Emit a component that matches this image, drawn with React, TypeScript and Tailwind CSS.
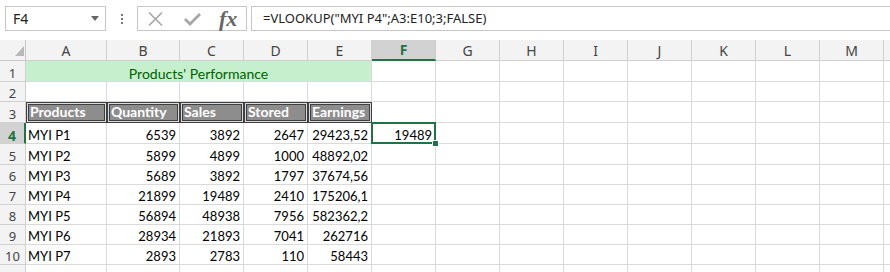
import { Fragment } from 'react';

const cols = ['A', 'B', 'C', 'D', 'E', 'F', 'G', 'H', 'I', 'J', 'K', 'L', 'M', ''];

const data = [
  ['MYI P1', '6539', '3892', '2647', '29423,52'],
  ['MYI P2', '5899', '4899', '1000', '48892,02'],
  ['MYI P3', '5689', '3892', '1797', '37674,56'],
  ['MYI P4', '21899', '19489', '2410', '175206,1'],
  ['MYI P5', '56894', '48938', '7956', '582362,2'],
  ['MYI P6', '28934', '21893', '7041', '262716'],
  ['MYI P7', '2893', '2783', '110', '58443'],
];

const heads = ['Products', 'Quantity', 'Sales', 'Stored', 'Earnings'];

const cell = 'border-r border-b border-[#dadada] bg-white';
const rowHead =
  'flex items-end justify-center leading-[15px] border-r border-b border-[#d0d0d0] bg-[#f3f3f3] text-[13px] text-[#444] font-["Noto_Sans",sans-serif]';

function Blank({ n }: { n: number }) {
  return (
    <>
      {Array.from({ length: n }).map((_, i) => (
        <div key={i} className={cell} />
      ))}
    </>
  );
}

export default function App() {
  return (
    <div className="w-[890px] h-[272px] overflow-hidden bg-white font-['Lato',sans-serif]">
      {/* formula bar */}
      <div className="h-[40px] flex items-start pt-[6px] bg-white">
        <div className="ml-[5px] w-[101px] h-[25px] border border-[#c6c6c6] flex items-center pl-[7px] pr-[6px] text-[14px] text-[#222] font-['Noto_Sans',sans-serif]">
          <span className="flex-1">F4</span>
          <svg width="8" height="5" viewBox="0 0 8 5">
            <polygon points="0,0 8,0 4,5" fill="#666" />
          </svg>
        </div>
        <div className="w-[31px] h-[25px] flex flex-col items-center justify-center gap-[2px]">
          <div className="w-[2px] h-[2px] bg-[#777]" />
          <div className="w-[2px] h-[2px] bg-[#777]" />
          <div className="w-[2px] h-[2px] bg-[#777]" />
        </div>
        <div className="w-[110px] h-[25px] border border-[#c6c6c6] flex items-center">
          <svg width="17" height="16" viewBox="0 0 17 16" className="ml-[9px]">
            <path d="M2 1.5 L15 14.5 M15 1.5 L2 14.5" stroke="#a6a6a6" strokeWidth="1.6" />
          </svg>
          <svg width="19" height="16" viewBox="0 0 19 16" className="ml-[19px]">
            <path d="M2 8 L7 13 L17 3" stroke="#a6a6a6" strokeWidth="2.8" fill="none" />
          </svg>
          <span className="ml-[17px] text-[22px] italic font-bold text-[#666] font-['Liberation_Serif',serif] leading-none">
            fx
          </span>
        </div>
        <div className="ml-[4px] flex-1 h-[25px] border border-r-0 border-[#c6c6c6] flex items-center pl-[11px] text-[13px] text-[#222] font-['Noto_Sans',sans-serif]">
          =VLOOKUP("MYI P4";A3:E10;3;FALSE)
        </div>
      </div>

      {/* sheet */}
      <div className="grid grid-cols-[26px_81px_73px_64px_64px_64px_64px_64px_64px_64px_64px_64px_64px_64px_64px] grid-rows-[21px_21px_20px_21px_21px_21px_20px_20px_20px_20px_20px_20px] text-[13px] leading-[15px] text-black">
        {/* header row */}
        <div className="relative border-r border-b border-[#c8c8c8] bg-[#f3f3f3]">
          <svg width="9" height="10" viewBox="0 0 9 10" className="absolute left-[15px] top-[6px]">
            <polygon points="0,10 9,0 9,10" fill="#b8b8b8" />
          </svg>
        </div>
        {cols.map((c, k) =>
          c === 'F' ? (
            <div
              key={k}
              className="flex items-center justify-center border-r border-[#c8c8c8] border-b-2 border-b-[#217346] bg-[#d2d2d2] text-[14px] font-bold text-[#217346] font-['Noto_Sans',sans-serif]"
            >
              {c}
            </div>
          ) : (
            <div
              key={k}
              className="flex items-center justify-center border-r border-b border-[#d0d0d0] bg-[#f3f3f3] text-[14px] text-[#444] font-['Noto_Sans',sans-serif]"
            >
              {c}
            </div>
          )
        )}

        {/* row 1 */}
        <div className={rowHead}>1</div>
        <div className="col-span-5 flex items-end justify-center border-r border-b border-[#dadada] bg-[#c6efce] text-[14px] text-[#006100]">
          Products' Performance
        </div>
        <Blank n={9} />

        {/* row 2 */}
        <div className={rowHead}>2</div>
        <Blank n={14} />

        {/* row 3 */}
        <div className={rowHead}>3</div>
        {heads.map((h) => (
          <div key={h} className="border border-[#3f3f3f] p-px bg-[#dcdcdc]">
            <div className="h-full border border-[#3f3f3f] bg-[#8d8d8d] flex items-end px-[1px] text-[14px] leading-[16px] font-bold text-white">
              {h}
            </div>
          </div>
        ))}
        <Blank n={9} />

        {/* data rows */}
        {data.map((r, i) => (
          <Fragment key={i}>
            {i === 0 ? (
              <div className="flex items-end justify-center border-b border-[#d0d0d0] border-r-2 border-r-[#217346] bg-[#d2d2d2] text-[14px] font-bold text-[#217346] font-['Noto_Sans',sans-serif]">
                {i + 4}
              </div>
            ) : (
              <div className={rowHead}>{i + 4}</div>
            )}
            <div className={`${cell} flex items-end pl-[2px]`}>{r[0]}</div>
            {r.slice(1).map((v, j) => (
              <div key={j} className={`${cell} flex items-end justify-end pr-[3px]`}>
                {v}
              </div>
            ))}
            {i === 0 ? (
              <div className={`${cell} relative flex items-end justify-end pr-[3px]`}>
                19489
                <div className="absolute -left-[1px] -top-[1px] -right-[1px] -bottom-[1px] border-2 border-[#217346]" />
                <div className="absolute -right-[4px] -bottom-[4px] w-[7px] h-[7px] bg-[#217346] border border-white" />
              </div>
            ) : (
              <Blank n={1} />
            )}
            <Blank n={8} />
          </Fragment>
        ))}

        {/* row 11 */}
        <div className="border-r border-b border-[#d0d0d0] bg-[#f3f3f3]" />
        <Blank n={14} />
      </div>
    </div>
  );
}
